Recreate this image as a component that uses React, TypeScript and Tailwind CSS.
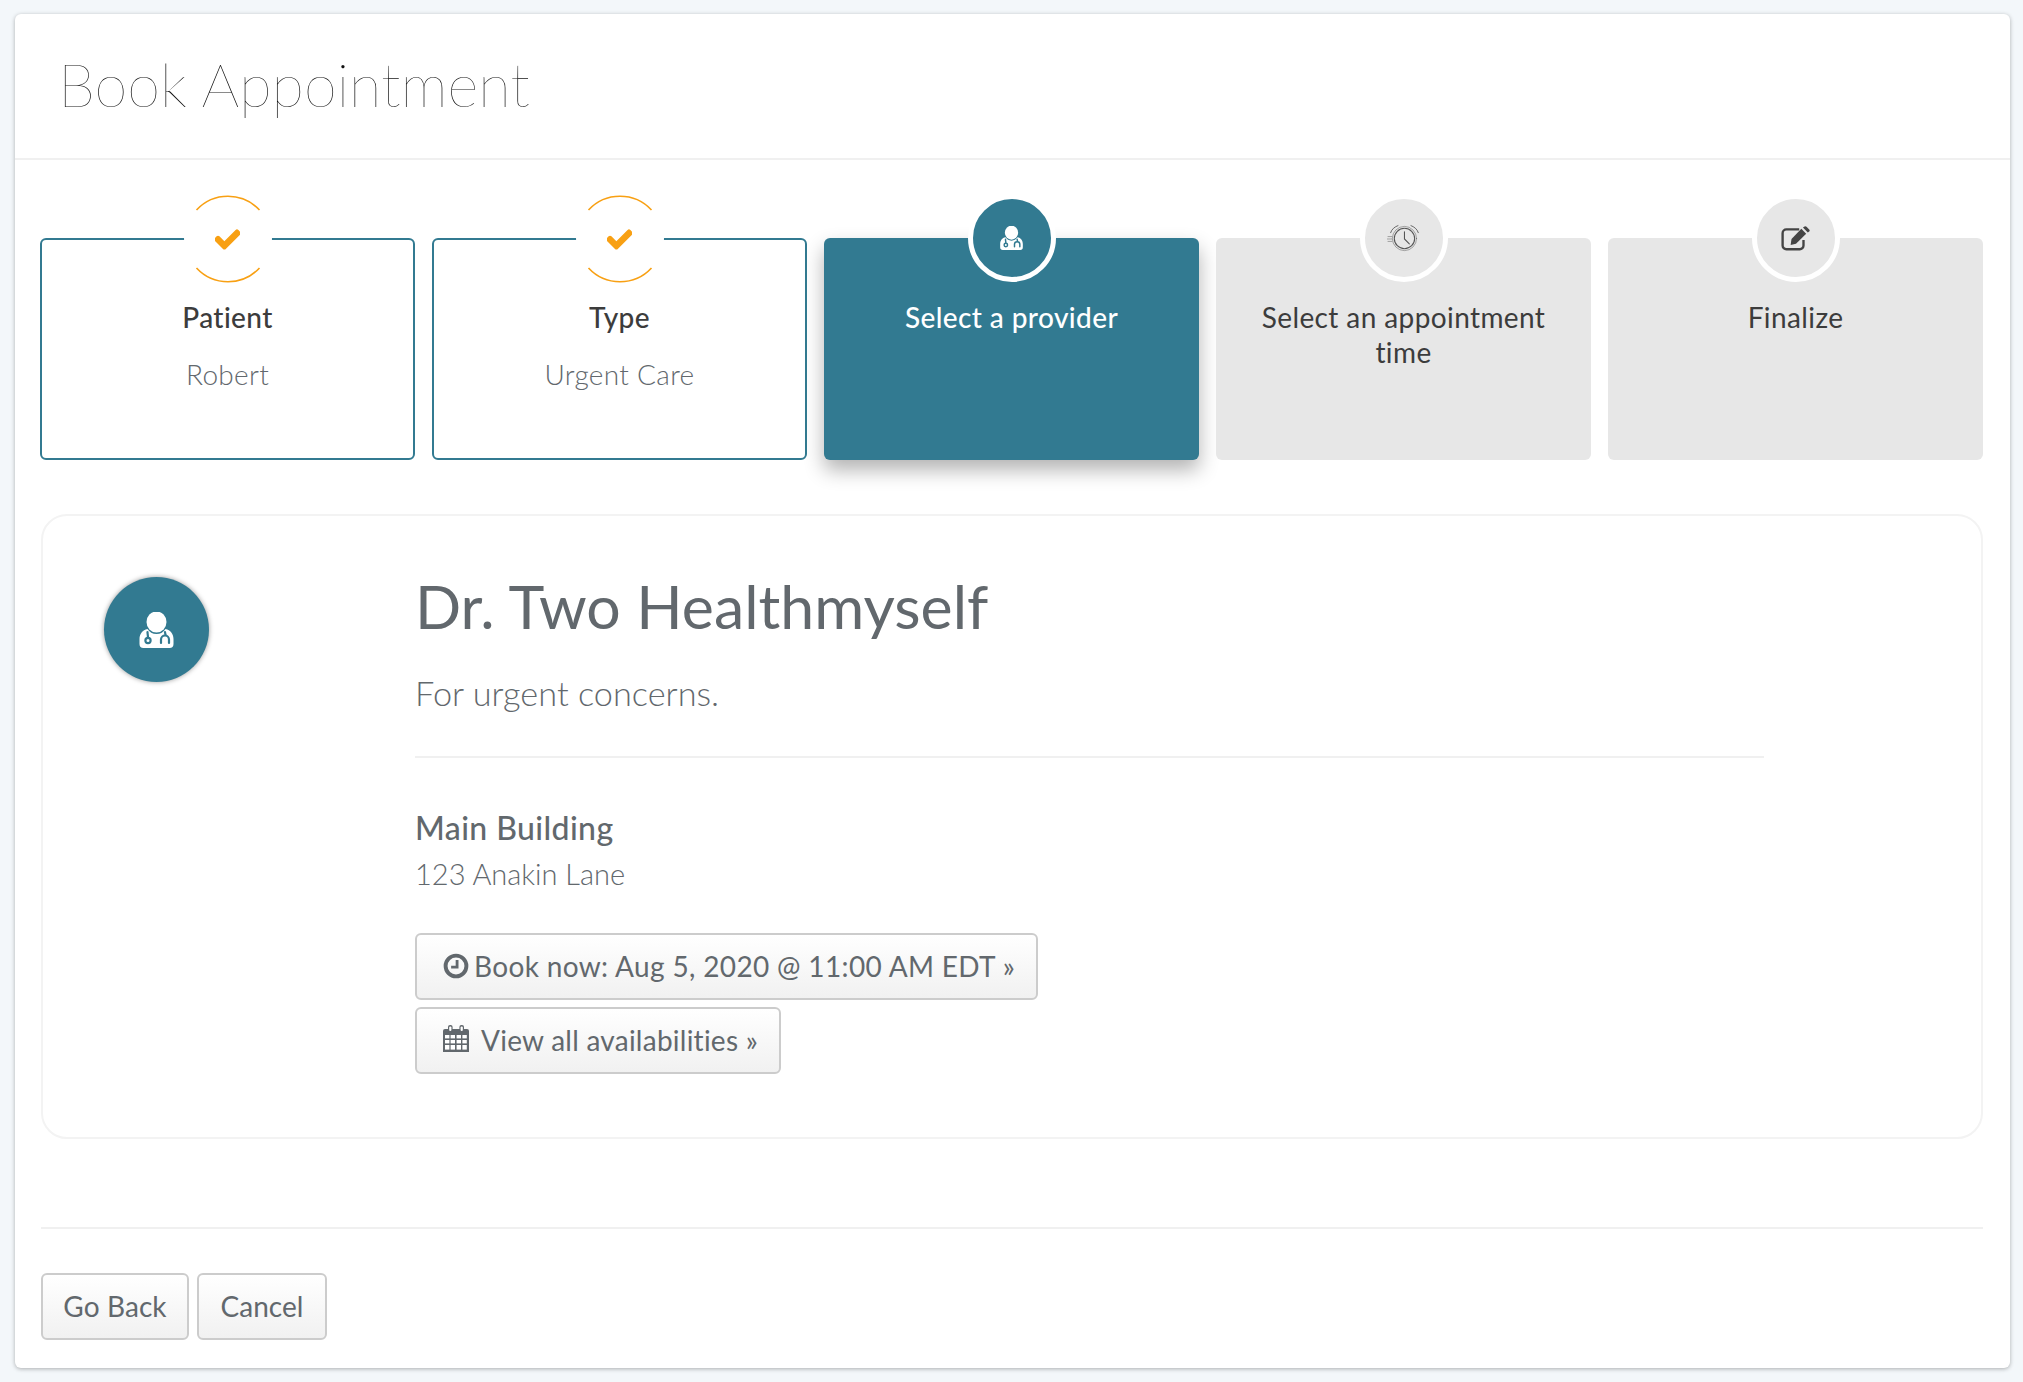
import { FaCheck } from "react-icons/fa";

const font = { fontFamily: "Lato, 'Open Sans', sans-serif" };

function DoctorIcon({ className, cut }: { className: string; cut: string }) {
  return (
    <svg viewBox="0 0 34 36" className={className}>
      <ellipse cx="17" cy="10" rx="10" ry="10.5" fill="#fff" />
      <path
        d="M8 17C3 18 0 22 0 27V32Q0 36 4 36H30Q34 36 34 32V27C34 22 31 18 26 17C24 20 21 22 17 22C13 22 10 20 8 17Z"
        fill="#fff"
      />
      <g fill="none" stroke={cut} strokeWidth="2.2" strokeLinecap="round">
        <path d="M8 20C8 22 8.5 23 8.5 26" />
        <circle cx="8.5" cy="28.5" r="2.6" />
        <path d="M25.5 20C25.5 21 26 22 26 23" />
        <path d="M21.5 31V27.5a4 4 0 0 1 8 0V31" />
      </g>
    </svg>
  );
}

function AlarmIcon() {
  return (
    <svg viewBox="0 0 34 32" className="w-[33px] h-[31px]" fill="none" stroke="#555" strokeLinecap="round">
      <circle cx="18" cy="16" r="10.5" strokeWidth="1.1" />
      <circle cx="18" cy="16" r="12.5" strokeWidth="0.5" />
      <path d="M18 9V16.5L23 21.5" strokeWidth="1.1" />
      <path d="M3.7 10C5 6 8 4 11.3 2.7M32.3 10C31 6 28 4 24.7 2.7" strokeWidth="0.9" />
      <path d="M1 14H5M0 16.5H5M1 19H5" strokeWidth="0.5" />
    </svg>
  );
}

function EditIcon() {
  return (
    <svg viewBox="0 0 28 23" className="w-[30px] h-[25px]">
      <path
        d="M17 3H5a3.5 3.5 0 0 0-3.5 3.5V18A3.5 3.5 0 0 0 5 21.5H17.5A3.5 3.5 0 0 0 21 18V13"
        fill="none"
        stroke="#444"
        strokeWidth="2.2"
      />
      <path d="M19 2.5L23.5 7L14 16.5L9 17.5L9.8 12Z" fill="#444" />
      <path d="M20.5 1.2L22 0.3a1.5 1.5 0 0 1 1.8 .2L26.3 3a1.5 1.5 0 0 1 0 2L25 6Z" fill="#444" />
    </svg>
  );
}

function ClockOIcon() {
  return (
    <svg viewBox="0 0 24 24" className="w-[26px] h-[26px] shrink-0 -mr-[2px]" fill="none" stroke="#62686d">
      <circle cx="12" cy="12" r="9.6" strokeWidth="3.6" />
      <path d="M13 6.5V13H7.5" strokeWidth="2.6" />
    </svg>
  );
}

function CalendarIcon() {
  return (
    <svg viewBox="0 0 26 27" className="w-[26px] h-[27px] shrink-0 -mt-[2px]">
      <path d="M0 6a2 2 0 0 1 2-2H24a2 2 0 0 1 2 2V27H0Z" fill="#62686d" />
      <rect x="5" y="0" width="4.6" height="7.5" rx="2" fill="#62686d" />
      <rect x="16.4" y="0" width="4.6" height="7.5" rx="2" fill="#62686d" />
      <rect x="6.2" y="1.6" width="2.2" height="4.4" rx="1" fill="#fff" />
      <rect x="17.6" y="1.6" width="2.2" height="4.4" rx="1" fill="#fff" />
      <g fill="#fff">
        <rect x="2" y="10" width="4.4" height="3.4" />
        <rect x="7.6" y="10" width="4.4" height="3.4" />
        <rect x="13.6" y="10" width="4.4" height="3.4" />
        <rect x="19.4" y="10" width="4.4" height="3.4" />
        <rect x="2" y="15" width="4.4" height="3.4" />
        <rect x="7.6" y="15" width="4.4" height="3.4" />
        <rect x="13.6" y="15" width="4.4" height="3.4" />
        <rect x="19.4" y="15" width="4.4" height="3.4" />
        <rect x="2" y="20" width="4.4" height="4.6" />
        <rect x="7.6" y="20" width="4.4" height="4.6" />
        <rect x="13.6" y="20" width="4.4" height="4.6" />
        <rect x="19.4" y="20" width="4.4" height="4.6" />
      </g>
    </svg>
  );
}

function DoneStep({ title, value }: { title: string; value: string }) {
  return (
    <div className="relative h-[222px] rounded-md border-2 border-[#327a91] bg-white pt-[60px] text-center">
      <div className="absolute left-1/2 top-[-45px] w-[88px] h-[88px] -translate-x-1/2 rounded-full bg-white">
        <svg viewBox="0 0 88 88" className="absolute inset-0 w-[88px] h-[88px]" fill="none" stroke="#f8a013" strokeWidth="1.6">
          <path d="M12.5 15A43 43 0 0 1 75.5 15" />
          <path d="M12.5 73A43 43 0 0 0 75.5 73" />
        </svg>
        <div className="absolute inset-0 flex items-center justify-center">
          <FaCheck className="w-[25px] h-[25px] text-[#f8a013]" stroke="currentColor" strokeWidth={30} />
        </div>
      </div>
      <div className="text-[28px] leading-[35px] tracking-[0.4px] font-medium text-[#3c3c3c]">{title}</div>
      <div className="mt-[22px] text-[28px] leading-[35px] tracking-[0.3px] font-light text-[#62686d]">{value}</div>
    </div>
  );
}

function TodoStep({ title, icon }: { title: string; icon: React.ReactNode }) {
  return (
    <div className="relative h-[222px] rounded-md bg-[#e7e7e7] px-10 pt-[62px] text-center text-[28px] leading-[35px] tracking-[0.4px] text-[#3c3c3c]">
      <div className="absolute left-1/2 top-[-44px] w-[88px] h-[88px] -translate-x-1/2 rounded-full border-[5px] border-white bg-[#e7e7e7] flex items-center justify-center">
        {icon}
      </div>
      {title}
    </div>
  );
}

export default function App() {
  return (
    <div style={font} className="min-h-[1382px] bg-[#f3f7fa] pl-[15px] pr-[13px] pt-[14px]">
      <div className="flex flex-col h-[1354px] rounded-md bg-white shadow-[0_1px_4px_rgba(0,0,0,0.3)]">
        <div className="h-[146px] shrink-0 border-b-2 border-[#f0f0f0] pl-[43px] pt-[37px]">
          <h1 className="text-[59.5px] leading-[66px] font-thin text-[#111]">Book Appointment</h1>
        </div>

        <div className="pl-[25px] pr-[27px] pt-[78px]">
          <div className="grid grid-cols-5 gap-[17px]">
            <DoneStep title="Patient" value="Robert" />
            <DoneStep title="Type" value="Urgent Care" />
            <div className="relative h-[222px] rounded-md bg-[#327a91] pt-[62px] text-center text-[28px] leading-[35px] tracking-[0.4px] font-medium text-white shadow-[0_10px_20px_rgba(0,0,0,0.3)]">
              <div className="absolute left-1/2 top-[-44px] w-[88px] h-[88px] -translate-x-1/2 rounded-full border-[5px] border-white bg-[#327a91] flex items-center justify-center">
                <DoctorIcon className="w-[23px] h-[24px]" cut="#327a91" />
              </div>
              Select a provider
            </div>
            <TodoStep title="Select an appointment time" icon={<AlarmIcon />} />
            <TodoStep title="Finalize" icon={<EditIcon />} />
          </div>

          <div className="ml-[1px] mt-[54px] flex h-[625px] rounded-[26px] border-2 border-[#f3f3f3] pt-[61px]">
            <div className="w-[372px] shrink-0 pl-[61px]">
              <div className="w-[105px] h-[105px] rounded-full bg-[#327a91] shadow-[0_0_5px_rgba(0,0,0,0.4)] flex items-center justify-center">
                <DoctorIcon className="w-[35px] h-[36px]" cut="#327a91" />
              </div>
            </div>
            <div className="w-[1349px]">
              <h2 className="-mt-[4px] text-[60.8px] leading-[66px] text-[#62686d]">Dr. Two Healthmyself</h2>
              <p className="mt-[32px] text-[34.3px] leading-[44px] font-light text-[#62686d]">For urgent concerns.</p>
              <div className="mt-[41px] border-t-2 border-[#f0f0f0]" />
              <div className="mt-[50px] text-[32px] leading-[40px] tracking-[0.4px] font-medium text-[#62686d]">Main Building</div>
              <div className="mt-[7px] text-[29px] leading-[38px] font-light text-[#62686d]">123 Anakin Lane</div>
              <div className="mt-[40px] flex flex-col items-start gap-[7px]">
                <button className="flex h-[67px] w-[623px] items-center gap-[7px] rounded-md border-2 border-[#ccc] bg-gradient-to-b from-white to-[#f1f1f1] pl-[26px] pb-[2px] text-[28px] tracking-[0.35px] text-[#62686d]">
                  <ClockOIcon />
                  Book now: Aug 5, 2020 @ 11:00 AM EDT »
                </button>
                <button className="flex h-[67px] w-[366px] items-center gap-[12px] rounded-md border-2 border-[#ccc] bg-gradient-to-b from-white to-[#f1f1f1] pl-[26px] pb-[2px] text-[28px] tracking-[0.25px] text-[#62686d]">
                  <CalendarIcon />
                  View all availabilities »
                </button>
              </div>
            </div>
          </div>

          <div className="ml-[1px] mt-[88px] border-t-2 border-[#f0f0f0]" />
          <div className="ml-[1px] mt-[44px] flex gap-[8px]">
            <button className="h-[67px] w-[148px] rounded-md border-2 border-[#ccc] bg-gradient-to-b from-white to-[#f1f1f1] pb-[2px] text-[28px] tracking-[0.1px] text-[#62686d]">Go Back</button>
            <button className="h-[67px] w-[130px] rounded-md border-2 border-[#ccc] bg-gradient-to-b from-white to-[#f1f1f1] pb-[2px] text-[28px] text-[#62686d]">Cancel</button>
          </div>
        </div>
      </div>
    </div>
  );
}
